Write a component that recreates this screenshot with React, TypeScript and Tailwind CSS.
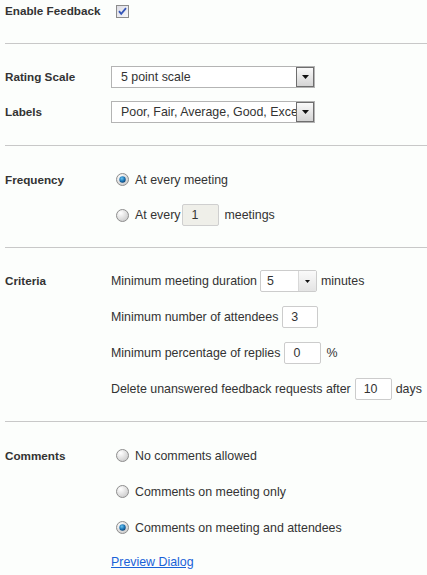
import React from "react";

const font = { fontFamily: '"Liberation Sans", Arial, sans-serif' };

function Checkbox() {
  return (
    <svg width="13" height="13" viewBox="0 0 13 13" className="block">
      <defs>
        <linearGradient id="cbg" x1="0" y1="0" x2="1" y2="1">
          <stop offset="0" stopColor="#dcdce4" />
          <stop offset="1" stopColor="#f8f8fa" />
        </linearGradient>
      </defs>
      <rect x="0.5" y="0.5" width="12" height="12" fill="url(#cbg)" stroke="#8c8c8c" />
      <path d="M3 6.2 L5.2 8.8 L10 3.2" fill="none" stroke="#3456b8" strokeWidth="1.8" />
    </svg>
  );
}

function Radio({ checked }: { checked?: boolean }) {
  return (
    <svg width="13" height="13" viewBox="0 0 13 13" className="block shrink-0">
      <defs>
        <radialGradient id="rg" cx="0.35" cy="0.3" r="0.8">
          <stop offset="0" stopColor="#ffffff" />
          <stop offset="1" stopColor="#c8c8c8" />
        </radialGradient>
        <radialGradient id="rdot" cx="0.4" cy="0.35" r="0.7">
          <stop offset="0" stopColor="#6cc4f0" />
          <stop offset="0.6" stopColor="#1a74b4" />
          <stop offset="1" stopColor="#0c3c6c" />
        </radialGradient>
      </defs>
      <circle cx="6.5" cy="6.5" r="6" fill="url(#rg)" stroke="#8e8e8e" />
      {checked && <circle cx="6.5" cy="6.5" r="3.2" fill="url(#rdot)" />}
    </svg>
  );
}

function Select({ value, width }: { value: string; width: number }) {
  return (
    <div
      className="flex h-[22px] border border-[#b4b4b4] bg-white items-center"
      style={{ width }}
    >
      <div className="flex-1 overflow-hidden whitespace-nowrap pl-[9px] text-[12.4px] text-[#333]">
        {value}
      </div>
      <div className="h-[20px] w-[18px] flex items-center justify-center border border-[#6e6e6e] bg-gradient-to-b from-[#fafafa] to-[#d4d4d4]">
        <svg width="7" height="4" viewBox="0 0 7 4">
          <path d="M0 0 H7 L3.5 4 Z" fill="#111" />
        </svg>
      </div>
    </div>
  );
}

function Input({
  value,
  width,
  disabled,
}: {
  value: string;
  width: number;
  disabled?: boolean;
}) {
  return (
    <div
      className={`h-[22px] rounded-[2px] border flex items-center pl-[8px] text-[12.4px] text-[#333] ${
        disabled ? "bg-[#efefe9] border-[#cfcfcf]" : "bg-white border-[#cccccc]"
      }`}
      style={{ width }}
    >
      {value}
    </div>
  );
}

function Divider() {
  return <div className="h-px bg-[#c8c8c8]" />;
}

function Label({ children }: { children: React.ReactNode }) {
  return (
    <div className="w-[106px] shrink-0 font-bold text-[11.7px] text-[#333] leading-[22px]">
      {children}
    </div>
  );
}

function Row({
  label,
  children,
}: {
  label?: string;
  children: React.ReactNode;
}) {
  return (
    <div className="flex h-[22px] items-center">
      <Label>{label}</Label>
      <div className="flex items-center text-[12.4px] text-[#333] whitespace-nowrap">{children}</div>
    </div>
  );
}

export default function App() {
  return (
    <div className="w-[427px] h-[575px] bg-[#fcfefc] overflow-hidden" style={font}>
      <div className="ml-[5px]">
        {/* Section 1 */}
        <div className="pb-[21px]">
          <Row label="Enable Feedback">
            <div className="ml-[5px]">
              <Checkbox />
            </div>
          </Row>
        </div>
        <Divider />
        {/* Section 2 */}
        <div className="pt-[22px] pb-[22px] flex flex-col gap-[13px]">
          <Row label="Rating Scale">
            <Select value="5 point scale" width={204} />
          </Row>
          <Row label="Labels">
            <Select value="Poor, Fair, Average, Good, Excellent" width={204} />
          </Row>
        </div>
        <Divider />
        {/* Section 3 */}
        <div className="pt-[23px] pb-[21px] flex flex-col gap-[13px]">
          <Row label="Frequency">
            <div className="ml-[5px] mr-[6px]">
              <Radio checked />
            </div>
            <span>At every meeting</span>
          </Row>
          <Row>
            <div className="ml-[5px] mr-[6px]">
              <Radio />
            </div>
            <span className="mr-[2px]">At every</span>
            <Input value="1" width={37} disabled />
            <span className="ml-[5px]">meetings</span>
          </Row>
        </div>
        <Divider />
        {/* Section 4 */}
        <div className="pt-[22px] pb-[21px] flex flex-col gap-[14px]">
          <Row label="Criteria">
            <span className="mr-[3px]">Minimum meeting duration</span>
            <div className="flex h-[22px] w-[57px] rounded-[2px] border border-[#cccccc] bg-white">
              <div className="flex-1 pl-[6px] leading-[20px]">5</div>
              <div className="w-[18px] border-l border-[#d8d8d8] bg-gradient-to-b from-[#fafafa] to-[#e4e4e4] flex items-center justify-center">
                <svg width="5" height="3" viewBox="0 0 5 3">
                  <path d="M0 0 H5 L2.5 3 Z" fill="#111" />
                </svg>
              </div>
            </div>
            <span className="ml-[4px]">minutes</span>
          </Row>
          <Row>
            <span className="mr-[4px]">Minimum number of attendees</span>
            <Input value="3" width={36} />
          </Row>
          <Row>
            <span className="mr-[4px]">Minimum percentage of replies</span>
            <Input value="0" width={37} />
            <span className="ml-[5px]">%</span>
          </Row>
          <Row>
            <span className="mr-[4px]">Delete unanswered feedback requests after</span>
            <Input value="10" width={37} />
            <span className="ml-[4px]">days</span>
          </Row>
        </div>
        <Divider />
        {/* Section 5 */}
        <div className="pt-[23px] flex flex-col gap-[14px]">
          <Row label="Comments">
            <div className="ml-[5px] mr-[6px]">
              <Radio />
            </div>
            <span>No comments allowed</span>
          </Row>
          <Row>
            <div className="ml-[5px] mr-[6px]">
              <Radio />
            </div>
            <span>Comments on meeting only</span>
          </Row>
          <Row>
            <div className="ml-[5px] mr-[6px]">
              <Radio checked />
            </div>
            <span>Comments on meeting and attendees</span>
          </Row>
          <div className="-mt-[2px]">
            <Row>
              <a href="#" className="text-[#1a62d8] underline">
                Preview Dialog
              </a>
            </Row>
          </div>
        </div>
      </div>
    </div>
  );
}
